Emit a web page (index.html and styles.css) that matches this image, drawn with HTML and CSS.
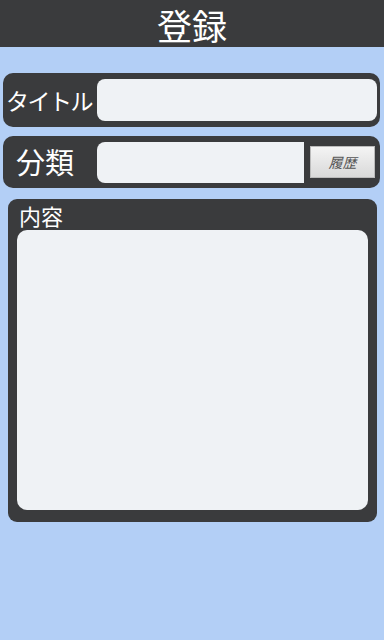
FILE: index.html
```html
<!DOCTYPE html>
<html lang="ja">
<head>
<meta charset="utf-8">
<link rel="stylesheet" href="styles.css">
</head>
<body>
<header class="bar">登録</header>
<main class="form">
  <div class="row row-title">
    <span class="label label-title">タイトル</span>
    <div class="input input-title"></div>
  </div>
  <div class="row row-cat">
    <span class="label label-cat">分類</span>
    <div class="input input-cat"></div>
    <div class="btn">履歴</div>
  </div>
  <div class="content">
    <span class="label label-content">内容</span>
    <div class="textarea"></div>
  </div>
</main>
</body>
</html>
```
FILE: styles.css
```css
html, body {
  margin: 0;
  padding: 0;
  width: 384px;
  height: 640px;
  background: #b3cff6;
  font-family: "Noto Sans CJK JP", "Noto Sans", sans-serif;
  overflow: hidden;
}
.bar {
  height: 47px;
  background: #3a3b3d;
  color: #fff;
  font-size: 35px;
  line-height: 50px;
  text-align: center;
}
.form {
  display: flex;
  flex-direction: column;
  padding: 26px 4px 0 3px;
}
.row {
  background: #3a3b3d;
  border-radius: 10px;
  display: flex;
  align-items: center;
  box-sizing: border-box;
}
.row-title {
  height: 54px;
  padding: 0 3px 0 3px;
}
.label {
  color: #fff;
  white-space: nowrap;
}
.label-title {
  font-size: 23px;
  width: 91px;
  letter-spacing: -1.5px;
}
.input {
  background: #eff2f5;
  border-radius: 8px;
  height: 42px;
}
.input-title {
  flex: 1;
}
.row-cat {
  height: 52px;
  margin-top: 9px;
  padding: 0 5px 0 13px;
}
.label-cat {
  font-size: 29px;
  width: 81px;
  line-height: 1;
  margin-bottom: 2px;
}
.input-cat {
  flex: 1;
  height: 41px;
  border-radius: 8px 0 0 8px;
}
.btn {
  width: 65px;
  height: 32px;
  margin-left: 6px;
  background: linear-gradient(#f4f4f4, #d9d9d9);
  border: 1px solid #bbb;
  box-sizing: border-box;
  color: #555;
  font-family: "Noto Sans CJK JP", serif;
  font-style: italic;
  font-size: 14px;
  line-height: 30px;
  text-align: center;
}
.content {
  margin: 11px 3px 0 5px;
  background: #3a3b3d;
  border-radius: 9px;
  height: 323px;
  box-sizing: border-box;
  padding: 3px 9px 12px 9px;
  display: flex;
  flex-direction: column;
}
.label-content {
  font-size: 22px;
  line-height: 26px;
  padding-left: 2px;
  margin-bottom: 2px;
}
.textarea {
  flex: 1;
  background: #eff2f5;
  border-radius: 10px;
}
```
